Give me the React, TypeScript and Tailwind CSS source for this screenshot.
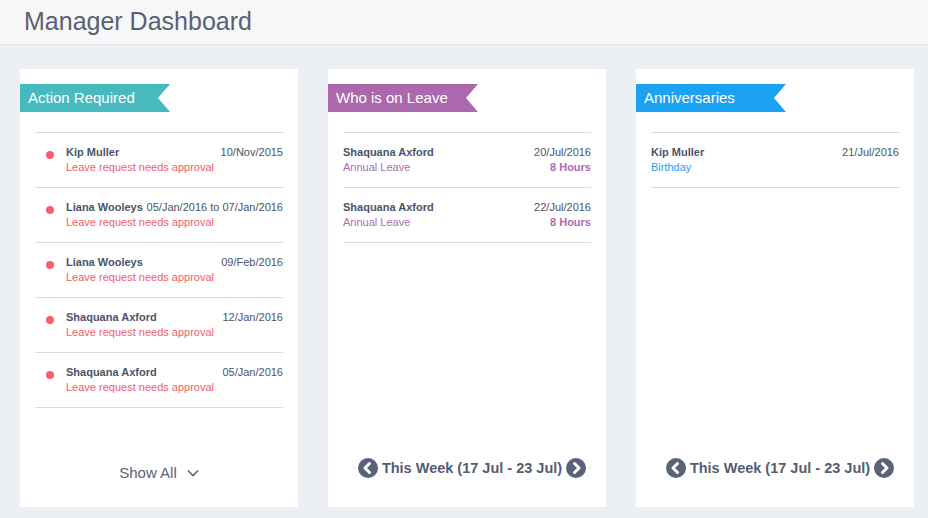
import React from 'react';

type Item = {
    name: string;
    sub: string;
    date: string;
    extra?: string;
};

const actionItems: Item[] = [
    { name: 'Kip Muller', sub: 'Leave request needs approval', date: '10/Nov/2015' },
    { name: 'Liana Wooleys', sub: 'Leave request needs approval', date: '05/Jan/2016 to 07/Jan/2016' },
    { name: 'Liana Wooleys', sub: 'Leave request needs approval', date: '09/Feb/2016' },
    { name: 'Shaquana Axford', sub: 'Leave request needs approval', date: '12/Jan/2016' },
    { name: 'Shaquana Axford', sub: 'Leave request needs approval', date: '05/Jan/2016' },
];

const leaveItems: Item[] = [
    { name: 'Shaquana Axford', sub: 'Annual Leave', date: '20/Jul/2016', extra: '8 Hours' },
    { name: 'Shaquana Axford', sub: 'Annual Leave', date: '22/Jul/2016', extra: '8 Hours' },
];

const anniversaryItems: Item[] = [{ name: 'Kip Muller', sub: 'Birthday', date: '21/Jul/2016' }];

const Ribbon: React.FC<{ title: string; color: string }> = ({ title, color }) => (
    <div
        className={`mt-[15px] h-[28px] w-[150px] pl-[8px] flex items-center text-[15px] text-white [clip-path:polygon(0_0,100%_0,calc(100%_-_12px)_50%,100%_100%,0_100%)] ${color}`}
    >
        {title}
    </div>
);

const CircleArrow: React.FC<{ dir: 'left' | 'right' }> = ({ dir }) => (
    <svg width="20" height="20" viewBox="0 0 20 20" className="shrink-0">
        <circle cx="10" cy="10" r="10" fill="#5a6278" />
        {dir === 'left' ? (
            <polyline points="11.5,5.5 7,10 11.5,14.5" fill="none" stroke="#fff" strokeWidth="3" strokeLinecap="round" strokeLinejoin="round" />
        ) : (
            <polyline points="8.5,5.5 13,10 8.5,14.5" fill="none" stroke="#fff" strokeWidth="3" strokeLinecap="round" strokeLinejoin="round" />
        )}
    </svg>
);

const WeekNav: React.FC = () => (
    <div className="mt-auto pb-[29px] pl-[10px] flex items-center justify-center gap-[4px]">
        <CircleArrow dir="left" />
        <span className="text-[14.5px] font-bold text-[#545d72] leading-5">This Week (17 Jul - 23 Jul)</span>
        <CircleArrow dir="right" />
    </div>
);

const Row: React.FC<{ item: Item; dot?: boolean; subColor: string }> = ({ item, dot, subColor }) => (
    <div className="h-[55px] border-b border-[#dcdcdc] pt-[12px] flex items-start text-[11px] leading-[15px]">
        {dot && <span className="mt-[6px] ml-[11px] mr-[12px] w-[8px] h-[8px] rounded-full bg-[#f0616a] shrink-0" />}
        <div className="flex-1">
            <div className="flex justify-between">
                <span className="font-bold text-[#4a5468]">{item.name}</span>
                <span className="text-[#4a5468]">{item.date}</span>
            </div>
            <div className="flex justify-between">
                <span className={subColor}>{item.sub}</span>
                {item.extra && <span className={`font-bold ${subColor}`}>{item.extra}</span>}
            </div>
        </div>
    </div>
);

const Card: React.FC<{ children: React.ReactNode }> = ({ children }) => (
    <div className="w-[278px] h-[438px] bg-white flex flex-col">{children}</div>
);

export default function App() {
    return (
        <div className="w-[928px] h-[518px] bg-[#ecf0f4] font-['Liberation_Sans',Arial,sans-serif] overflow-hidden">
            <div className="h-[45px] bg-[#f7f7f7] border-b border-[#e2e5e9] pl-[24px] flex items-center">
                <h1 className="text-[25px] text-[#596178] leading-none pb-[2px]">Manager Dashboard</h1>
            </div>
            <div className="pt-[24px] pl-[20px] flex gap-[30px]">
                <Card>
                    <Ribbon title="Action Required" color="bg-[#47babf]" />
                    <div className="mt-[20px] mx-[15px] border-t border-[#dcdcdc]">
                        {actionItems.map((item, i) => (
                            <Row key={i} item={item} dot subColor="text-[#f2606a]" />
                        ))}
                    </div>
                    <div className="mt-auto pb-[24px] flex items-center justify-center gap-[10px]">
                        <span className="text-[15px] leading-5 text-[#5b6479]">Show All</span>
                        <svg width="12" height="8" viewBox="0 0 12 8">
                            <polyline points="1,1.5 6,6.5 11,1.5" fill="none" stroke="#5b6479" strokeWidth="1.6" />
                        </svg>
                    </div>
                </Card>
                <Card>
                    <Ribbon title="Who is on Leave" color="bg-[#ab68ad]" />
                    <div className="mt-[20px] mx-[15px] border-t border-[#dcdcdc]">
                        {leaveItems.map((item, i) => (
                            <Row key={i} item={item} subColor="text-[#b06bb3]" />
                        ))}
                    </div>
                    <WeekNav />
                </Card>
                <Card>
                    <Ribbon title="Anniversaries" color="bg-[#1ba2f3]" />
                    <div className="mt-[20px] mx-[15px] border-t border-[#dcdcdc]">
                        {anniversaryItems.map((item, i) => (
                            <Row key={i} item={item} subColor="text-[#2e9cf0]" />
                        ))}
                    </div>
                    <WeekNav />
                </Card>
            </div>
        </div>
    );
}
